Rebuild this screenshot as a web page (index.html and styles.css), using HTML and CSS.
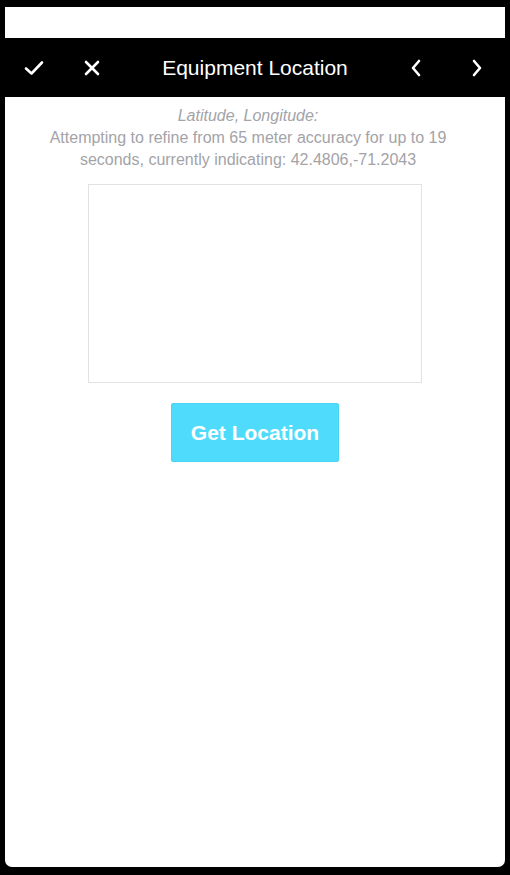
FILE: index.html
```html
<!DOCTYPE html>
<html lang="en">
<head>
    <meta charset="UTF-8">
    <meta name="viewport" content="width=device-width, initial-scale=1.0">
    <title>Equipment Location</title>
    <link rel="stylesheet" href="styles.css">
</head>
<body>
    <div class="screen">
        <div class="status-bar"></div>
        <header class="toolbar">
            <a href="#" class="tool-btn save">
                <svg width="20" height="16" viewBox="0 0 20 16"><path d="M2 8.5 L7.5 13.5 L18 2.5" fill="none" stroke="#fff" stroke-width="2.6" stroke-linecap="round" stroke-linejoin="round"/></svg>
            </a>
            <a href="#" class="tool-btn cancel">
                <svg width="18" height="18" viewBox="0 0 18 18"><path d="M3 3 L15 15 M15 3 L3 15" fill="none" stroke="#fff" stroke-width="2.6" stroke-linecap="round"/></svg>
            </a>
            <h1 class="title">Equipment Location</h1>
            <a href="#" class="tool-btn prev">
                <svg width="12" height="20" viewBox="0 0 12 20"><path d="M9 3 L3 10 L9 17" fill="none" stroke="#fff" stroke-width="2.6" stroke-linecap="round" stroke-linejoin="round"/></svg>
            </a>
            <a href="#" class="tool-btn next">
                <svg width="12" height="20" viewBox="0 0 12 20"><path d="M3 3 L9 10 L3 17" fill="none" stroke="#fff" stroke-width="2.6" stroke-linecap="round" stroke-linejoin="round"/></svg>
            </a>
        </header>
        <main class="content">
            <div class="info">
                <p class="label">Latitude, Longitude:</p>
                <p class="status">Attempting to refine from 65 meter accuracy for up to 19 seconds, currently indicating: 42.4806,-71.2043</p>
            </div>
            <div class="map"></div>
            <button class="locate-btn">Get Location</button>
        </main>
    </div>
</body>
</html>
```

FILE: styles.css
```css
body {
    margin: 0;
    padding: 7px 5px 0;
    background: #000;
    font-family: "Liberation Sans", Arial, sans-serif;
}
.screen {
    height: 860px;
    background: #fff;
    border-radius: 0 0 7px 7px;
    overflow: hidden;
}
.status-bar {
    height: 31px;
    background: #fff;
}
.toolbar {
    height: 59px;
    background: #000;
    display: flex;
    align-items: center;
    position: relative;
}
.tool-btn {
    display: flex;
    align-items: center;
    justify-content: center;
    width: 40px;
    height: 40px;
}
.save {
    margin-left: 9px;
}
.cancel {
    margin-left: 18px;
}
.prev {
    margin-left: auto;
    margin-right: 21px;
}
.next {
    margin-right: 8px;
}
.title {
    position: absolute;
    left: 0;
    right: 0;
    margin: 0;
    text-align: center;
    color: #fff;
    font-size: 21px;
    font-weight: normal;
    pointer-events: none;
}
.content {
    display: flex;
    flex-direction: column;
    align-items: center;
    padding: 8px 40px 0;
}
.info {
    padding-right: 14px;
}
.label,
.status {
    margin: 0;
    color: #a3a3a8;
    font-size: 16px;
    line-height: 22px;
    text-align: center;
}
.label {
    font-style: italic;
}
.map {
    width: 332px;
    height: 197px;
    margin-top: 13px;
    border: 1px solid #e2e2e6;
}
.locate-btn {
    margin-top: 20px;
    width: 168px;
    height: 59px;
    background: #4fdcfc;
    color: #fff;
    border: 1px solid #4ad4f4;
    border-radius: 2px;
    font-family: "Liberation Sans", Arial, sans-serif;
    font-size: 21px;
    font-weight: bold;
    cursor: pointer;
}
```
